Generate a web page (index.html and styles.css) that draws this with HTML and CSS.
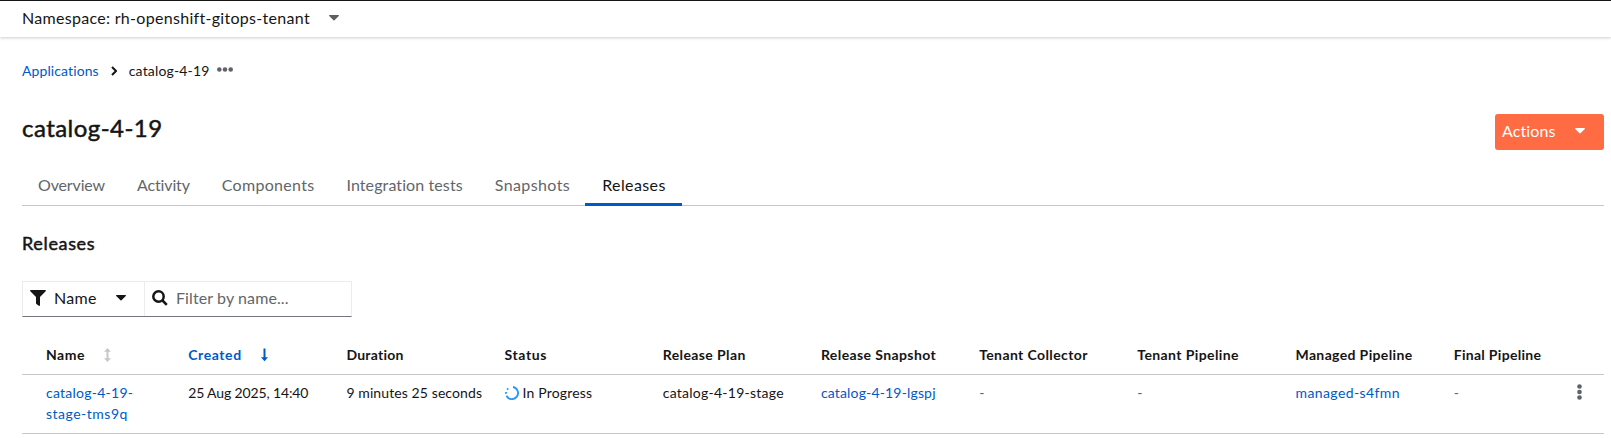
FILE: index.html
```html
<!DOCTYPE html>
<html lang="en">
<head>
<meta charset="utf-8">
<title>Releases</title>
<link rel="stylesheet" href="styles.css">
</head>
<body>
<header class="namespace-bar">
  <span class="track-30">Namespace: rh-openshift-gitops-tenant</span>
  <svg class="caret caret-muted" viewBox="0 0 10 6"><path d="M.6 0h8.800c.5 0 .8.6.4 1L5.500 5.200a.7.7 0 0 1-1 0L.2 1C-.2.6.1 0 .6 0z"/></svg>
</header>
<main class="page">
  <nav class="breadcrumb">
    <a class="track-10">Applications</a>
    <svg class="chevron" viewBox="0 0 6 10"><path d="M1 1l4 4-4 4"/></svg>
    <span class="track-15">catalog-4-19</span>
    <svg class="dots" viewBox="0 0 16 5"><circle cx="2.300" cy="2.500" r="2.300"/><circle cx="8" cy="2.500" r="2.300"/><circle cx="13.700" cy="2.500" r="2.300"/></svg>
  </nav>
  <div class="title-row">
    <h1>catalog-4-19</h1>
    <button class="actions"><span class="track-10">Actions</span>
      <svg class="caret" viewBox="0 0 10 6"><path d="M.6 0h8.800c.5 0 .8.6.4 1L5.500 5.200a.7.7 0 0 1-1 0L.2 1C-.2.6.1 0 .6 0z"/></svg>
    </button>
  </div>
  <div class="tabs">
    <a class="tab track-tight">Overview</a>
    <a class="tab track-tight">Activity</a>
    <a class="tab track-30">Components</a>
    <a class="tab track-10">Integration tests</a>
    <a class="tab track-40">Snapshots</a>
    <a class="tab tab-active track-40">Releases</a>
  </div>
  <h2>Releases</h2>
  <div class="filter">
    <div class="filter-type">
      <svg class="funnel" viewBox="0 0 16 16"><path d="M.8 0h14.400c.7 0 1 .8.5 1.300L10 7v8.200c0 .6-.7 1-1.200.6l-2.400-1.700A.8.8 0 0 1 6 13.500V7L.3 1.300C-.2.8.1 0 .8 0z"/></svg>
      <span class="track-30">Name</span>
      <svg class="caret" viewBox="0 0 10 6"><path d="M.6 0h8.800c.5 0 .8.6.4 1L5.500 5.200a.7.7 0 0 1-1 0L.2 1C-.2.6.1 0 .6 0z"/></svg>
    </div>
    <div class="filter-input">
      <svg class="search" viewBox="0 0 16 16"><circle cx="6.500" cy="6.500" r="5.200"/><path d="M10.500 10.500L14.800 14.800"/></svg>
      <span class="track-10">Filter by name...</span>
    </div>
  </div>
  <div class="grid head">
    <div class="cell track-50"><span>Name</span>
      <svg class="sort" viewBox="0 0 7 14"><path d="M0 3.800L3.500 0 7 3.800H4.500v6.400H7L3.500 14 0 10.200h2.500V3.800z"/></svg></div>
    <div class="cell sorted track-60"><span>Created</span>
      <svg class="sort" viewBox="0 0 7 14"><path d="M2.500.5h2v8.700H7L3.500 13.200 0 9.200h2.500z"/></svg></div>
    <div class="cell track-25">Duration</div>
    <div class="cell track-60">Status</div>
    <div class="cell track-40">Release Plan</div>
    <div class="cell track-40">Release Snapshot</div>
    <div class="cell track-40">Tenant Collector</div>
    <div class="cell track-40">Tenant Pipeline</div>
    <div class="cell track-35">Managed Pipeline</div>
    <div class="cell track-30">Final Pipeline</div>
    <div class="cell"></div>
  </div>
  <div class="grid row">
    <div class="cell"><a><span class="track-25">catalog-4-19-</span><br><span class="track-50">stage-tms9q</span></a></div>
    <div class="cell track-tight">25 Aug 2025, 14:40</div>
    <div class="cell track-10">9 minutes 25 seconds</div>
    <div class="cell status track-15"><svg class="spinner" viewBox="0 0 14 14"><path d="M8 1A6.100 6.100 0 1 1 1.500 9.800"/><path d="M1 7.700V6.100M2.100 3.600l1.100-1.200"/></svg>In Progress</div>
    <div class="cell track-25">catalog-4-19-stage</div>
    <div class="cell track-15"><a>catalog-4-19-lgspj</a></div>
    <div class="cell none">-</div>
    <div class="cell none">-</div>
    <div class="cell track-40"><a>managed-s4fmn</a></div>
    <div class="cell none">-</div>
    <div class="cell"><svg class="kebab" viewBox="0 0 5 16"><circle cx="2.500" cy="2.500" r="2.300"/><circle cx="2.500" cy="8" r="2.300"/><circle cx="2.500" cy="13.500" r="2.300"/></svg></div>
  </div>
</main>
</body>
</html>
```
FILE: styles.css
```css
* { box-sizing: border-box; }
body { margin: 0; background: #fff; color: #151515; font: 400 16px/24px Lato, "Open Sans", sans-serif; font-variant-ligatures: none; }
svg { display: block; flex: none; }
a { color: #0059c9; }

/* Letter tracking, in hundredths of a pixel */
.track-tight { letter-spacing: -.14px; }
.track-10 { letter-spacing: .1px; }
.track-15 { letter-spacing: .16px; }
.track-25 { letter-spacing: .25px; }
.track-30 { letter-spacing: .3px; }
.track-35 { letter-spacing: .36px; }
.track-40 { letter-spacing: .4px; }
.track-50 { letter-spacing: .5px; }
.track-60 { letter-spacing: .6px; }

.caret { width: 10px; height: 6px; fill: currentColor; }
.caret-muted { color: #5c6064; margin-left: 19px; }
.namespace-bar { display: flex; align-items: center; height: 37px; padding: 0 22px 2px; border-top: 1px solid #151515; box-shadow: 0 1px 3px rgba(3, 3, 3, .2); }
.page { padding: 23px 7px 0 22px; }
.breadcrumb { display: flex; align-items: center; height: 21px; font-size: 14px; line-height: 21px; }
.chevron { width: 6px; height: 10px; margin: 0 12px; fill: none; stroke: #151515; stroke-width: 2; }
.dots { width: 16px; height: 5px; margin: 0 0 2px 8px; fill: #5f6368; }
.title-row { display: flex; justify-content: space-between; margin-top: 33px; }
h1 { margin: -1px 0 0; font: 400 24px/30px Lato, sans-serif; letter-spacing: .46px; -webkit-text-stroke: .5px; }
.actions { display: flex; align-items: center; justify-content: space-between; width: 109px; height: 36px; padding: 0 19px 2px 7px; border: 0; border-radius: 3px; background: #ff6b42; color: #fff; font: inherit; }
.tabs { display: flex; height: 40px; margin-top: 16px; box-shadow: inset 0 -1px #c7c7c7; }
.tab { padding: 7px 16px; color: #62666a; }
.tab-active { margin-left: -1px; padding: 7px 16px 7px 17px; color: #151515; border-bottom: 3px solid #0059c9; }
h2 { margin: 25px 0 0; font: 400 18px/24px Lato, sans-serif; letter-spacing: .65px; -webkit-text-stroke: .5px; }
.filter { display: flex; width: 330px; height: 36px; margin-top: 26px; border: 1px solid #ececec; border-bottom-color: #72767b; }
.filter-type { display: flex; align-items: center; width: 122px; padding: 0 0 2px 7px; border-right: 1px solid #ececec; }
.filter-type .caret { margin-left: 19px; }
.filter-input { display: flex; align-items: center; padding: 0 0 2px 7px; color: #62666a; }
.funnel { width: 16px; height: 16px; margin-right: 8px; fill: #151515; }
.search { width: 16px; height: 16px; margin-right: 8px; fill: none; stroke: #151515; stroke-width: 2.5; }
.grid { display: grid; grid-template-columns: repeat(9, 158.2px) 100px 1fr; border-bottom: 1px solid #c7c7c7; font-size: 14px; line-height: 21px; }
.head { height: 58px; font-weight: 700; }
.head .cell { display: flex; padding-top: 27px; }
.cell { padding: 7px 0 0 8px; white-space: nowrap; }
.cell:first-child { padding-left: 24px; }
.sorted { color: #0059c9; }
.sort { width: 7px; height: 14px; margin: 4px 0 0 19px; fill: currentColor; }
.cell:first-child .sort { color: #c7c7c7; }
.row { height: 59px; }
.status { display: flex; }
.none { color: #5f6368; }
.spinner { width: 14px; height: 14px; margin: 4px 4px 0 0; fill: none; stroke: #2b9af3; stroke-width: 1.9; }
.kebab { width: 5px; height: 16px; margin: 2px 0 0 23px; fill: #5f6368; }
```
